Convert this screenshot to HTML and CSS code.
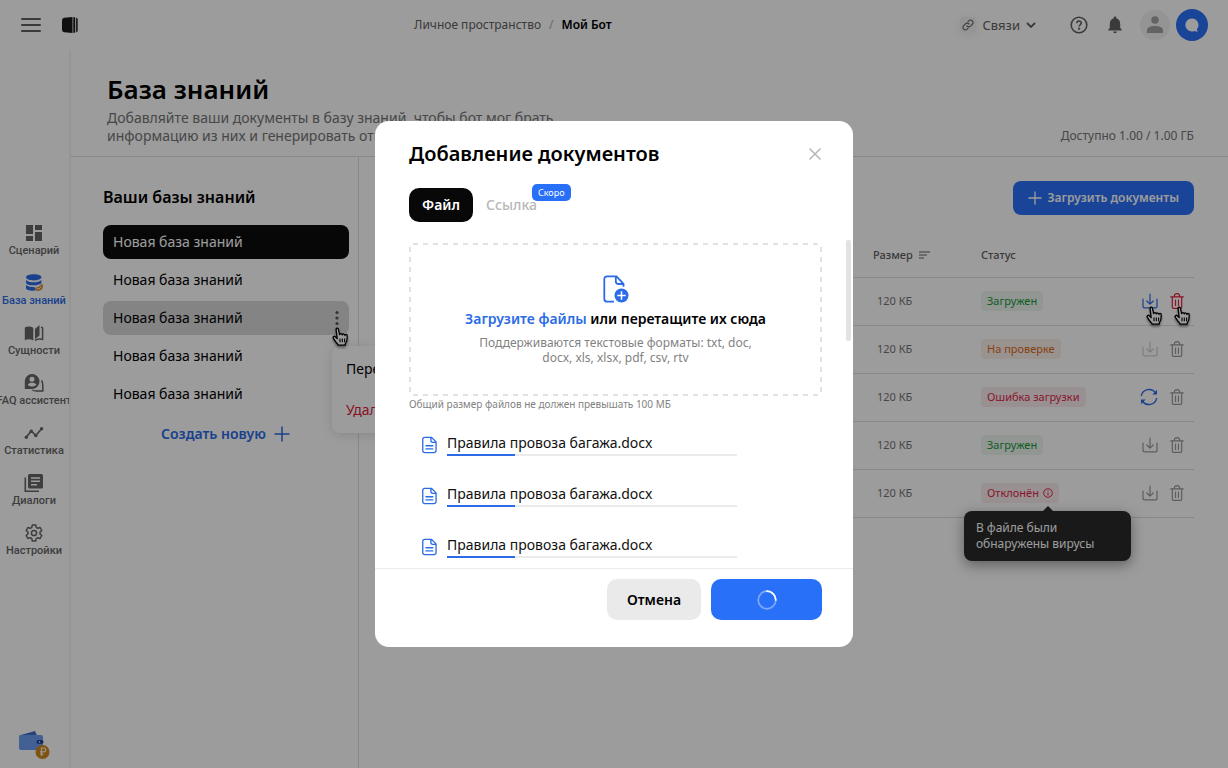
FILE: index.html
```html
<!DOCTYPE html>
<html lang="ru">
<head>
<meta charset="utf-8">
<meta name="viewport" content="width=device-width, initial-scale=1">
<title>База знаний</title>
<link rel="stylesheet" href="styles.css">
</head>
<body>
<svg class="sprite" aria-hidden="true">
  <symbol id="download" viewBox="0 0 16 16"><path d="M8 1v10M4.800 8 8 11.200 11.200 8M1 6v7.500c0 .8.500 1.300 1.300 1.300h11.400c.8 0 1.300-.5 1.300-1.300V6" fill="none" stroke="currentColor" stroke-width="1.200" stroke-linecap="round" stroke-linejoin="round"/></symbol>
  <symbol id="trash" viewBox="0 0 14 16"><path d="M.7 3.800h12.600M2.300 3.800v10.400c0 .7.400 1.100 1.100 1.100h7.200c.7 0 1.100-.4 1.100-1.100V3.800M4.300 3.600C4.300 1.700 5.200.7 7 .7s2.700 1 2.700 2.900M5.500 7v5.400M8.500 7v5.400" fill="none" stroke="currentColor" stroke-width="1.200" stroke-linecap="round"/></symbol>
  <symbol id="hand" viewBox="0 0 18 19"><path d="M6.200 11.600 4.300 9.700c-1-1-2.800.1-2 1.500 1.300 2 2.500 4.300 4.700 6.200v.8h7.200v-1c1.600-2 2-3.500 2-6.600V8.700c0-1.500-2.100-1.700-2.300-.2 0-1.700-2.400-2-2.600-.6-.2-1.700-2.500-1.700-2.700-.3L7.500 2.300c-.4-1.700-2.700-1.300-2.400.5z" fill="#fff" stroke="#000" stroke-width="1.300" stroke-linejoin="round"/><path d="M9 11.500v3.700M11.300 11.500v3.700M13.600 11.500v3.700" fill="none" stroke="#000" stroke-width="1.100"/></symbol>
  <symbol id="plus" viewBox="0 0 16 16"><path d="M8 1v14M1 8h14" fill="none" stroke="currentColor" stroke-width="1.500" stroke-linecap="round"/></symbol>
  <symbol id="doc" viewBox="0 0 16 18"><path d="M3 .8h7L15 5.700V15a2.200 2.200 0 0 1-2.200 2.200H3A2.200 2.200 0 0 1 .8 15V3A2.200 2.200 0 0 1 3 .8zM9.500 1v3.300c0 1.200.6 1.900 1.900 1.900h3.400M4.200 9.800h7.300M4.200 13.200h7.300" fill="none" stroke="currentColor" stroke-width="1.400" stroke-linejoin="round" stroke-linecap="round"/></symbol>
</svg>

<div class="app">
  <header class="topbar">
    <div class="topbar-left">
      <button class="icon-button" aria-label="Меню"><svg width="20" height="16" viewBox="0 0 20 16"><path d="M1 2h18M1 8h18M1 14h18" stroke="currentColor" stroke-width="2" stroke-linecap="round"/></svg></button>
      <svg class="logo" width="18" height="18" viewBox="0 0 18 18"><path d="M1 4.500Q1 2 3.200 1.700L11.500 1v16L3.200 16.300Q1 16 1 13.500z"/><path d="M12.300 1.200h1.700v15.600h-1.700z"/><path d="M14.800 1.500q2 .3 2 2v11q0 1.700-2 2z" opacity=".85"/></svg>
    </div>
    <nav class="crumbs"><a href="#">Личное пространство</a><span class="slash">/</span><strong>Мой Бот</strong></nav>
    <div class="topbar-right">
      <button class="links-button">
        <span class="link-chip"><svg width="12" height="12" viewBox="0 0 24 24"><path d="M10 14a5 5 0 0 0 7 .3l4-4a5 5 0 0 0-7-7l-2 2M14 10a5 5 0 0 0-7-.3l-4 4a5 5 0 0 0 7 7l2-2" fill="none" stroke="currentColor" stroke-width="2.200" stroke-linecap="round"/></svg></span>
        Связи
        <svg width="10" height="6" viewBox="0 0 10 6"><path d="m1 1 4 4 4-4" fill="none" stroke="currentColor" stroke-width="1.800"/></svg>
      </button>
      <button class="icon-button help" aria-label="Помощь"><svg width="18" height="18" viewBox="0 0 18 18" fill="none" stroke="currentColor" stroke-width="1.600"><circle cx="9" cy="9" r="7.800"/><path d="M6.800 7.200C6.800 4.300 11.300 4.400 11.300 7c0 1.700-2.200 1.800-2.200 3.600"/><circle cx="9.100" cy="12.800" r=".4"/></svg></button>
      <button class="icon-button bell" aria-label="Уведомления"><svg width="14" height="18" viewBox="0 0 14 18"><path d="M7 17.300c-1 0-1.800-.8-1.800-1.700h3.600c0 .9-.8 1.700-1.800 1.700zM12.200 12V7.700c0-2.700-1.500-4.800-3.900-5.400V1.700C8.300 1 7.700.5 7 .5s-1.300.5-1.300 1.200v.6C3.300 2.900 1.800 5 1.800 7.700V12L.3 13.600v.9h13.400v-.9z" fill="currentColor"/></svg></button>
      <button class="avatar" aria-label="Профиль"><svg width="16" height="18" viewBox="0 0 16 18"><circle cx="8" cy="4" r="3.800"/><path d="M0 17v-2.500C0 11.500 3 10 8 10s8 1.500 8 4.500V17z"/></svg></button>
      <button class="avatar avatar-brand" aria-label="Ассистент"><svg width="14" height="14" viewBox="0 0 14 14"><path d="M7 .5a6.500 6.500 0 1 0 2.600 12.400c.9.400 1.900.7 3.400.6-.7-.7-1-1.400-1.100-2.300A6.500 6.500 0 0 0 7 .5z"/></svg></button>
    </div>
  </header>

  <aside class="sidebar">
    <nav class="side-nav">
      <a href="#"><svg width="18" height="18" viewBox="0 0 18 18" fill="currentColor"><path d="M1 1h7v9H1zM10 1h7v5h-7zM1 12h7v5H1zM10 8h7v9h-7z"/></svg><span>Сценарий</span></a>
      <a href="#" class="current"><svg width="20" height="19" viewBox="0 0 20 19"><path d="M2 3.800C2 1.900 5.500.8 9.700.8s7.700 1.100 7.700 3-3.500 3.100-7.700 3.100S2 5.800 2 3.800zM2 6.500c1.500 1.700 4.400 2.300 7.700 2.300s6.200-.6 7.700-2.300V9c0 1-1 1.500-2 1.800-1.500 1-4 1-5.700 1C5.500 11.800 2 11 2 9zM2 11.500c2 1.700 4.500 2.100 8.500 2.100l1.200 3.400c-5 .6-9.700-.5-9.700-2.600z" fill="currentColor"/><path d="M11.500 14.200c1-1 2.300 0 3.300-1.200l3-2.700c1.700 1 1.500 3.500.5 5-1.500 2-4.500 2.800-6.300 1.500-1-.8-1-1.800-.5-2.600z" fill="#d98e34"/><path d="m13 14.500 1.800 1 2.700-2.700" fill="none" stroke="#fff" stroke-width=".9"/></svg><span>База знаний</span></a>
      <a href="#"><svg width="20" height="18" viewBox="0 0 20 18"><path d="M.8 3.500C3 2 6.500 2 9.300 3.800v12.700C6.500 15 3.500 15 .8 16.200z" fill="currentColor"/><path d="m11 5 4.500-4v10.500L11 15.200z" fill="currentColor"/><path d="M17 3.200c.6.200 1.100.4 1.600.7v11.400c-2.700-.7-5.300-.6-7.600 1" fill="none" stroke="currentColor" stroke-width="1.500"/></svg><span>Сущности</span></a>
      <a href="#"><svg width="20" height="18" viewBox="0 0 20 18"><path fill-rule="evenodd" d="M8 0a7.500 7.500 0 1 1 0 15H.8V7.500A7.400 7.400 0 0 1 8 0zm0 2.800a2.500 2.500 0 1 0 0 5 2.500 2.500 0 0 0 0-5zM3.700 10.500c2 2.700 6.700 2.700 8.700 0-1.800-2.500-6.900-2.500-8.700 0z" fill="currentColor"/><path d="M17.500 6.500q1.300 2 1.300 4.500v6h-6.500q-2.500 0-4-1" fill="none" stroke="currentColor" stroke-width="1.500"/></svg><span>FAQ ассистент</span></a>
      <a href="#"><svg width="20" height="18" viewBox="0 0 20 18"><path d="m2 13.500 5.300-6.500 4.500 4.500 6-7" fill="none" stroke="currentColor" stroke-width="1.700"/><g fill="currentColor"><circle cx="2.300" cy="13.200" r="1.700"/><circle cx="7.300" cy="7.200" r="1.700"/><circle cx="11.800" cy="11.500" r="1.700"/><circle cx="17.600" cy="4.800" r="1.700"/></g></svg><span>Статистика</span></a>
      <a href="#"><svg width="20" height="19" viewBox="0 0 20 19"><path fill-rule="evenodd" d="M5.500.5h12q1.500 0 1.500 1.500v11.500q0 1.500-1.500 1.500h-12Q4 15 4 13.500V2Q4 .5 5.500.5zM7 3.800v1.500h9V3.800zm0 3.300v1.500h9V7.100zm0 3.300v1.500h6v-1.500z" fill="currentColor"/><path d="M1.300 4v13.700H15" fill="none" stroke="currentColor" stroke-width="1.600"/></svg><span>Диалоги</span></a>
      <a href="#"><svg width="18" height="18" viewBox="0 0 18 18" fill="none" stroke="currentColor" stroke-width="1.500" stroke-linejoin="round"><path d="M7.300 1h3.400l.5 2.300 1.600 1 2.300-.8 1.700 3L15 8.100v1.800l1.800 1.600-1.700 3-2.300-.8-1.600 1-.5 2.300H7.300l-.5-2.300-1.600-1-2.300.8-1.700-3L3 9.900V8.100L1.200 6.500l1.700-3 2.300.8 1.600-1z"/><circle cx="9" cy="9" r="2.600"/></svg><span>Настройки</span></a>
    </nav>
    <a href="#" class="wallet" aria-label="Баланс"><svg width="32" height="30" viewBox="0 0 32 30"><path d="M1 5.500 17 1l2 4.500z" fill="#3c70c8"/><path d="M1 6.500Q1 5 2.500 5H23q2 0 2 2v13H3q-2 0-2-2z" fill="#6e9df4"/><rect x="18.500" y="10" width="7" height="3.800" rx="1.900" fill="#1740a0"/><circle cx="21.500" cy="11.900" r=".8" fill="#dce8ff"/><circle cx="24.500" cy="22" r="7" fill="#d08a1e"/><path d="M23.500 26v-8h2.200c2.600 0 2.600 3.800 0 3.800h-3.700M22 24h3.500" fill="none" stroke="#fff3da" stroke-width="1.200"/></svg></a>
  </aside>

  <main class="page">
    <div class="page-head">
      <div>
        <h1>База знаний</h1>
        <p>Добавляйте ваши документы в базу знаний, чтобы бот мог брать<br>информацию из них и генерировать ответы</p>
      </div>
      <span class="quota">Доступно 1.00 / 1.00 ГБ</span>
    </div>
    <div class="columns">
      <section class="bases">
        <h2>Ваши базы знаний</h2>
        <ul class="base-list">
          <li><button class="base selected">Новая база знаний</button></li>
          <li><button class="base">Новая база знаний</button></li>
          <li class="with-menu">
            <button class="base hovered">Новая база знаний<svg width="4" height="16" viewBox="0 0 4 16"><circle cx="2" cy="2.500" r="1.600"/><circle cx="2" cy="8" r="1.600"/><circle cx="2" cy="13.500" r="1.600"/></svg></button>
            <div class="menu"><button>Переименовать</button><button class="danger">Удалить</button></div>
            <svg class="hand hand-menu" width="18" height="19"><use href="#hand"/></svg>
          </li>
          <li><button class="base">Новая база знаний</button></li>
          <li><button class="base">Новая база знаний</button></li>
        </ul>
        <button class="create">Создать новую <svg width="16" height="16"><use href="#plus"/></svg></button>
      </section>
      <section class="files">
        <button class="upload"><svg width="14" height="14"><use href="#plus"/></svg>Загрузить документы</button>
        <table>
          <thead><tr><th class="col-name"></th><th class="col-size">Размер <svg width="12" height="8" viewBox="0 0 12 8"><path d="M0 1h11M0 4h8M0 7h5" stroke="currentColor" stroke-width="1.200"/></svg></th><th class="col-status">Статус</th><th class="col-actions"></th></tr></thead>
          <tbody>
            <tr><td></td><td class="size">120 КБ</td><td><span class="tag ok">Загружен</span></td><td><div class="actions"><button class="act blue" aria-label="Скачать"><svg width="16" height="16"><use href="#download"/></svg><svg class="hand" width="18" height="19"><use href="#hand"/></svg></button><button class="act red" aria-label="Удалить"><svg width="14" height="16"><use href="#trash"/></svg><svg class="hand" width="18" height="19"><use href="#hand"/></svg></button></div></td></tr>
            <tr><td></td><td class="size">120 КБ</td><td><span class="tag wait">На проверке</span></td><td><div class="actions"><button class="act off" aria-label="Скачать" disabled><svg width="16" height="16"><use href="#download"/></svg></button><button class="act" aria-label="Удалить"><svg width="14" height="16"><use href="#trash"/></svg></button></div></td></tr>
            <tr><td></td><td class="size">120 КБ</td><td><span class="tag fail">Ошибка загрузки</span></td><td><div class="actions"><button class="act blue" aria-label="Повторить"><svg width="18" height="18" viewBox="0 0 18 18"><path d="M1.300 8A7.800 7.800 0 0 1 15.500 5M16.700 10A7.800 7.800 0 0 1 2.500 13" fill="none" stroke="currentColor" stroke-width="1.400"/><path d="M17 1.800v4.700h-4.700zM1 16.200v-4.700h4.700z" fill="currentColor"/></svg></button><button class="act" aria-label="Удалить"><svg width="14" height="16"><use href="#trash"/></svg></button></div></td></tr>
            <tr><td></td><td class="size">120 КБ</td><td><span class="tag ok">Загружен</span></td><td><div class="actions"><button class="act" aria-label="Скачать"><svg width="16" height="16"><use href="#download"/></svg></button><button class="act" aria-label="Удалить"><svg width="14" height="16"><use href="#trash"/></svg></button></div></td></tr>
            <tr><td></td><td class="size">120 КБ</td><td><span class="tag fail">Отклонён <span class="info"><svg width="10" height="10" viewBox="0 0 10 10" fill="none" stroke="currentColor"><circle cx="5" cy="5" r="4.300"/><path d="M5 4.500v3M5 2.500v1"/></svg><span class="tooltip" role="tooltip">В файле были обнаружены вирусы</span></span></span></td><td><div class="actions"><button class="act" aria-label="Скачать"><svg width="16" height="16"><use href="#download"/></svg></button><button class="act" aria-label="Удалить"><svg width="14" height="16"><use href="#trash"/></svg></button></div></td></tr>
          </tbody>
        </table>
      </section>
    </div>
  </main>
</div>

<div class="overlay">
  <div class="modal" role="dialog" aria-modal="true" aria-labelledby="modal-title">
    <div class="modal-head">
      <h2 id="modal-title">Добавление документов</h2>
      <button class="close" aria-label="Закрыть"><svg width="14" height="14" viewBox="0 0 14 14"><path d="m1.500 1.500 11 11M12.500 1.500l-11 11" stroke="currentColor" stroke-width="1.500"/></svg></button>
    </div>
    <div class="tabs">
      <button class="tab active">Файл</button>
      <button class="tab" disabled>Ссылка<span class="soon">Скоро</span></button>
    </div>
    <div class="modal-body">
      <div class="dropzone">
        <svg width="26" height="28" viewBox="0 0 26 28"><path d="M11 26.700H4.200Q1.300 26.700 1.300 23.700V4.300Q1.300 1.300 4.200 1.300h9.300l7 7.500v3M12.800 1.500v4.700q0 2.800 2.800 2.800h4.700" fill="none" stroke="currentColor" stroke-width="1.800"/><circle cx="18.500" cy="20.500" r="7" fill="currentColor"/><path d="M18.500 16.300v8.400M14.300 20.500h8.400" stroke="#fff" stroke-width="1.500"/></svg>
        <p class="drop-title"><a href="#">Загрузите файлы</a> или перетащите их сюда</p>
        <p class="drop-hint">Поддерживаются текстовые форматы: txt, doc,<br>docx, xls, xlsx, pdf, csv, rtv</p>
      </div>
      <p class="limit">Общий размер файлов не должен превышать 100 МБ</p>
      <ul class="queue">
        <li><svg width="15" height="18"><use href="#doc"/></svg><label class="file">Правила провоза багажа.docx<progress value="68" max="290"></progress></label></li>
        <li><svg width="15" height="18"><use href="#doc"/></svg><label class="file">Правила провоза багажа.docx<progress value="68" max="290"></progress></label></li>
        <li><svg width="15" height="18"><use href="#doc"/></svg><label class="file">Правила провоза багажа.docx<progress value="68" max="290"></progress></label></li>
      </ul>
      <span class="thumb"></span>
    </div>
    <div class="modal-foot">
      <button class="cancel">Отмена</button>
      <button class="submit" aria-label="Загрузка"><svg width="20" height="20" viewBox="0 0 20 20" fill="none" stroke="#fff" stroke-width="1.700"><circle cx="10" cy="10" r="8.800" opacity=".4"/><path d="M10 1.200a8.800 8.800 0 0 1 8.800 8.800" stroke-linecap="round"/></svg></button>
    </div>
  </div>
</div>
</body>
</html>
```
FILE: styles.css
```css
* { box-sizing: border-box; }
body {
  margin: 0;
  background: #fff;
  color: #000;
  font: 14px/18px "Noto Sans", "Open Sans", sans-serif;
}
h1, h2, p, ul { margin: 0; padding: 0; }
ul { list-style: none; }
button { border: 0; padding: 0; background: none; font: inherit; color: inherit; text-align: left; }
a { color: inherit; text-decoration: none; }
svg { display: block; flex: none; }
.sprite { position: absolute; width: 0; height: 0; }

.app {
  display: grid;
  grid-template: 50px 1fr / 71px 1fr;
  min-height: 100vh;
}

/* Top bar */
.topbar {
  grid-column: 1 / -1;
  display: grid;
  grid-template-columns: 393px 1fr auto;
  align-items: center;
  padding: 0 20px 0 21px;
  color: #606060;
  font-size: 12px;
}
.topbar-left { display: flex; align-items: center; gap: 20px; }
.logo { fill: #1a1a1a; }
.icon-button { display: flex; color: #606060; }
.crumbs { display: flex; gap: 8px; }
.crumbs strong { color: #000; font-weight: 600; }
.slash { color: #aaa; }
.topbar-right { display: flex; align-items: center; }
.links-button { display: flex; align-items: center; gap: 6px; font-size: 13px; }
.link-chip { padding: 2px; border-radius: 4px; background: #f2f2f2; box-shadow: 0 2px 8px #0001; }
.help { margin-left: 34px; }
.bell { margin-left: 20px; }
.avatar {
  display: grid;
  place-items: center;
  width: 30px;
  height: 30px;
  margin-left: 18px;
  border-radius: 50%;
  background: #f2f2f2;
  fill: #a2a2a2;
}
.avatar-brand { width: 32px; height: 32px; margin-left: 6px; background: #2b70f8; fill: #fff; }

/* Sidebar */
.sidebar {
  display: flex;
  flex-direction: column;
  justify-content: space-between;
  padding: 173px 1px 8px 0;
  border-right: 2px solid #f3f3f3;
  overflow: hidden;
}
.side-nav { display: flex; flex-direction: column; }
.side-nav a {
  display: flex;
  flex-direction: column;
  align-items: center;
  gap: 1px;
  height: 50px;
  color: #666;
  font: 500 11px/14px Roboto, sans-serif;
  white-space: nowrap;
}
.side-nav svg { height: 20px; }
.side-nav .current { color: #2b6be6; }
.wallet { padding-left: 18px; }

/* Page */
.page { display: flex; flex-direction: column; min-width: 0; }
.page-head {
  display: flex;
  justify-content: space-between;
  align-items: flex-end;
  padding: 22px 34px 11px 36px;
  border-bottom: 1px solid #dedede;
  color: #747474;
}
.page-head h1 { margin-bottom: 3px; color: #000; font-size: 26px; line-height: 34px; font-weight: 600; }
.quota { font-size: 12px; }
.columns { flex: 1; display: grid; grid-template-columns: 288px 1fr; }

.bases { padding: 29px 9px 0 32px; border-right: 1px solid #dedede; }
.bases h2 { margin-bottom: 17px; font-size: 16px; line-height: 22px; font-weight: 600; }
.base-list { display: flex; flex-direction: column; gap: 4px; }
.base {
  display: flex;
  align-items: center;
  justify-content: space-between;
  width: 100%;
  height: 34px;
  padding: 0 10px;
  border-radius: 8px;
}
.selected { background: #0d0d0d; color: #fff; }
.hovered { background: #d8d8d8; fill: #555; }
.with-menu { position: relative; }
.menu {
  position: absolute;
  top: 45px;
  left: 229px;
  display: flex;
  flex-direction: column;
  gap: 23px;
  width: 150px;
  padding: 14px;
  border-radius: 8px;
  background: #fff;
  box-shadow: 0 2px 12px #0002;
}
.danger { color: #e0203c; }
.hand { position: absolute; top: 13px; left: 3px; filter: drop-shadow(0 2px 1px #0006); }
.hand-menu { top: 26px; left: 228px; }
.create { display: flex; align-items: center; gap: 8px; margin: 14px auto 0 58px; color: #2b6be6; font-weight: 600; }

.files { padding: 24px 34px 0; min-width: 0; }
.upload {
  display: flex;
  align-items: center;
  gap: 6px;
  height: 34px;
  margin-left: auto;
  padding: 0 15px;
  border-radius: 8px;
  background: #2b70f8;
  color: #fff;
  font-size: 12px;
  font-weight: 600;
}
table { width: 100%; margin-top: 18px; border-collapse: collapse; table-layout: fixed; color: #747474; font-size: 11px; line-height: 16px; }
th, td { height: 48px; padding: 0; border-bottom: 1px solid #dedede; text-align: left; }
th { height: 44px; font-weight: 500; color: #606060; }
th svg { display: inline-block; margin-left: 3px; }
.col-size { width: 108px; }
.col-status { width: 158px; }
.col-actions { width: 55px; }
.size { padding-left: 4px; }
.tag { display: inline-flex; align-items: center; gap: 4px; height: 20px; padding: 0 6px; border-radius: 4px; }
.ok { background: #eef6ef; color: #16963a; }
.wait { background: #fbf0eb; color: #dd6a1e; }
.fail { background: #faebee; color: #e0284c; }
.actions { display: flex; align-items: center; justify-content: flex-end; gap: 12px; padding-right: 10px; }
.act { position: relative; color: #999; }
.act.off { color: #cfcfcf; }
.act.blue { color: #2b6be6; }
.act.red { color: #e0203c; }
.info { position: relative; }
.tooltip {
  position: absolute;
  top: 23px;
  right: -78px;
  width: 167px;
  padding: 9px 12px;
  border-radius: 8px;
  background: #292929;
  box-shadow: 0 4px 14px #0006;
  color: #fff;
  font-size: 12px;
}
.tooltip::before {
  content: "";
  position: absolute;
  top: -5px;
  left: 78px;
  border: 6px solid transparent;
  border-top: 0;
  border-bottom-color: #292929;
}

/* Upload dialog */
.overlay {
  position: fixed;
  inset: 0;
  display: grid;
  place-items: center;
  background: rgba(0, 0, 0, .39);
}
.modal {
  width: 478px;
  max-width: 100%;
  padding: 20px 0 27px;
  border-radius: 14px;
  background: #fff;
}
.modal-head { display: flex; justify-content: space-between; align-items: center; padding: 0 31px 0 34px; }
.modal-head h2 { font-size: 20px; line-height: 26px; font-weight: 600; }
.close { color: #b5b5b5; }
.tabs { display: flex; padding: 21px 34px 18px; }
.tab { position: relative; height: 34px; padding: 0 13px; border-radius: 10px; color: #b8b8b8; font-weight: 500; }
.tab.active { background: #080808; color: #fff; font-weight: 600; }
.soon {
  position: absolute;
  top: -4px;
  left: 59px;
  padding: 0 6px;
  border-radius: 5px;
  background: #2970f8;
  color: #fff;
  font-size: 9px;
  line-height: 17px;
  font-weight: 400;
}
.modal-body { position: relative; height: 329px; padding: 3px 31px 0 34px; border-bottom: 1px solid #ebebeb; overflow: hidden; }
.dropzone {
  display: flex;
  flex-direction: column;
  align-items: center;
  padding: 32px 0 31px;
  color: #2b6be6;
  text-align: center;
  background:
    repeating-linear-gradient(90deg, #e2e2e2 0 5px, transparent 5px 10px) 4px 0 / 100% 2px no-repeat,
    repeating-linear-gradient(90deg, #e2e2e2 0 5px, transparent 5px 10px) 4px 100% / 100% 2px no-repeat,
    repeating-linear-gradient(#e2e2e2 0 5px, transparent 5px 10px) 0 4px / 2px 100% no-repeat,
    repeating-linear-gradient(#e2e2e2 0 5px, transparent 5px 10px) 100% 4px / 2px 100% no-repeat;
}
.drop-title { margin: 7px 0; color: #000; font-weight: 600; }
.drop-title a { color: #2b6be6; }
.drop-hint { color: #828282; font-size: 12px; line-height: 15px; }
.limit { color: #828282; font-size: 10px; line-height: 16px; }
.queue { display: flex; flex-direction: column; gap: 29px; padding: 22px 0 0 13px; }
.queue li { display: flex; align-items: center; gap: 10px; color: #2b6be6; }
.file { display: flex; flex-direction: column; gap: 2px; width: 290px; color: #111; }
progress { appearance: none; width: 100%; height: 2px; border: 0; background: #ebebeb; }
progress::-webkit-progress-bar { background: #ebebeb; }
progress::-webkit-progress-value { background: #2b6be6; }
.thumb { position: absolute; top: 0; right: 2px; width: 5px; height: 101px; border-radius: 2px; background: #e2e2e2; }
.modal-foot { display: flex; justify-content: flex-end; gap: 10px; padding: 10px 31px 0; }
.cancel, .submit { height: 41px; border-radius: 10px; font-weight: 600; }
.cancel { width: 94px; background: #eaeaea; text-align: center; }
.submit { display: grid; place-items: center; width: 111px; background: #2970f8; }
```
